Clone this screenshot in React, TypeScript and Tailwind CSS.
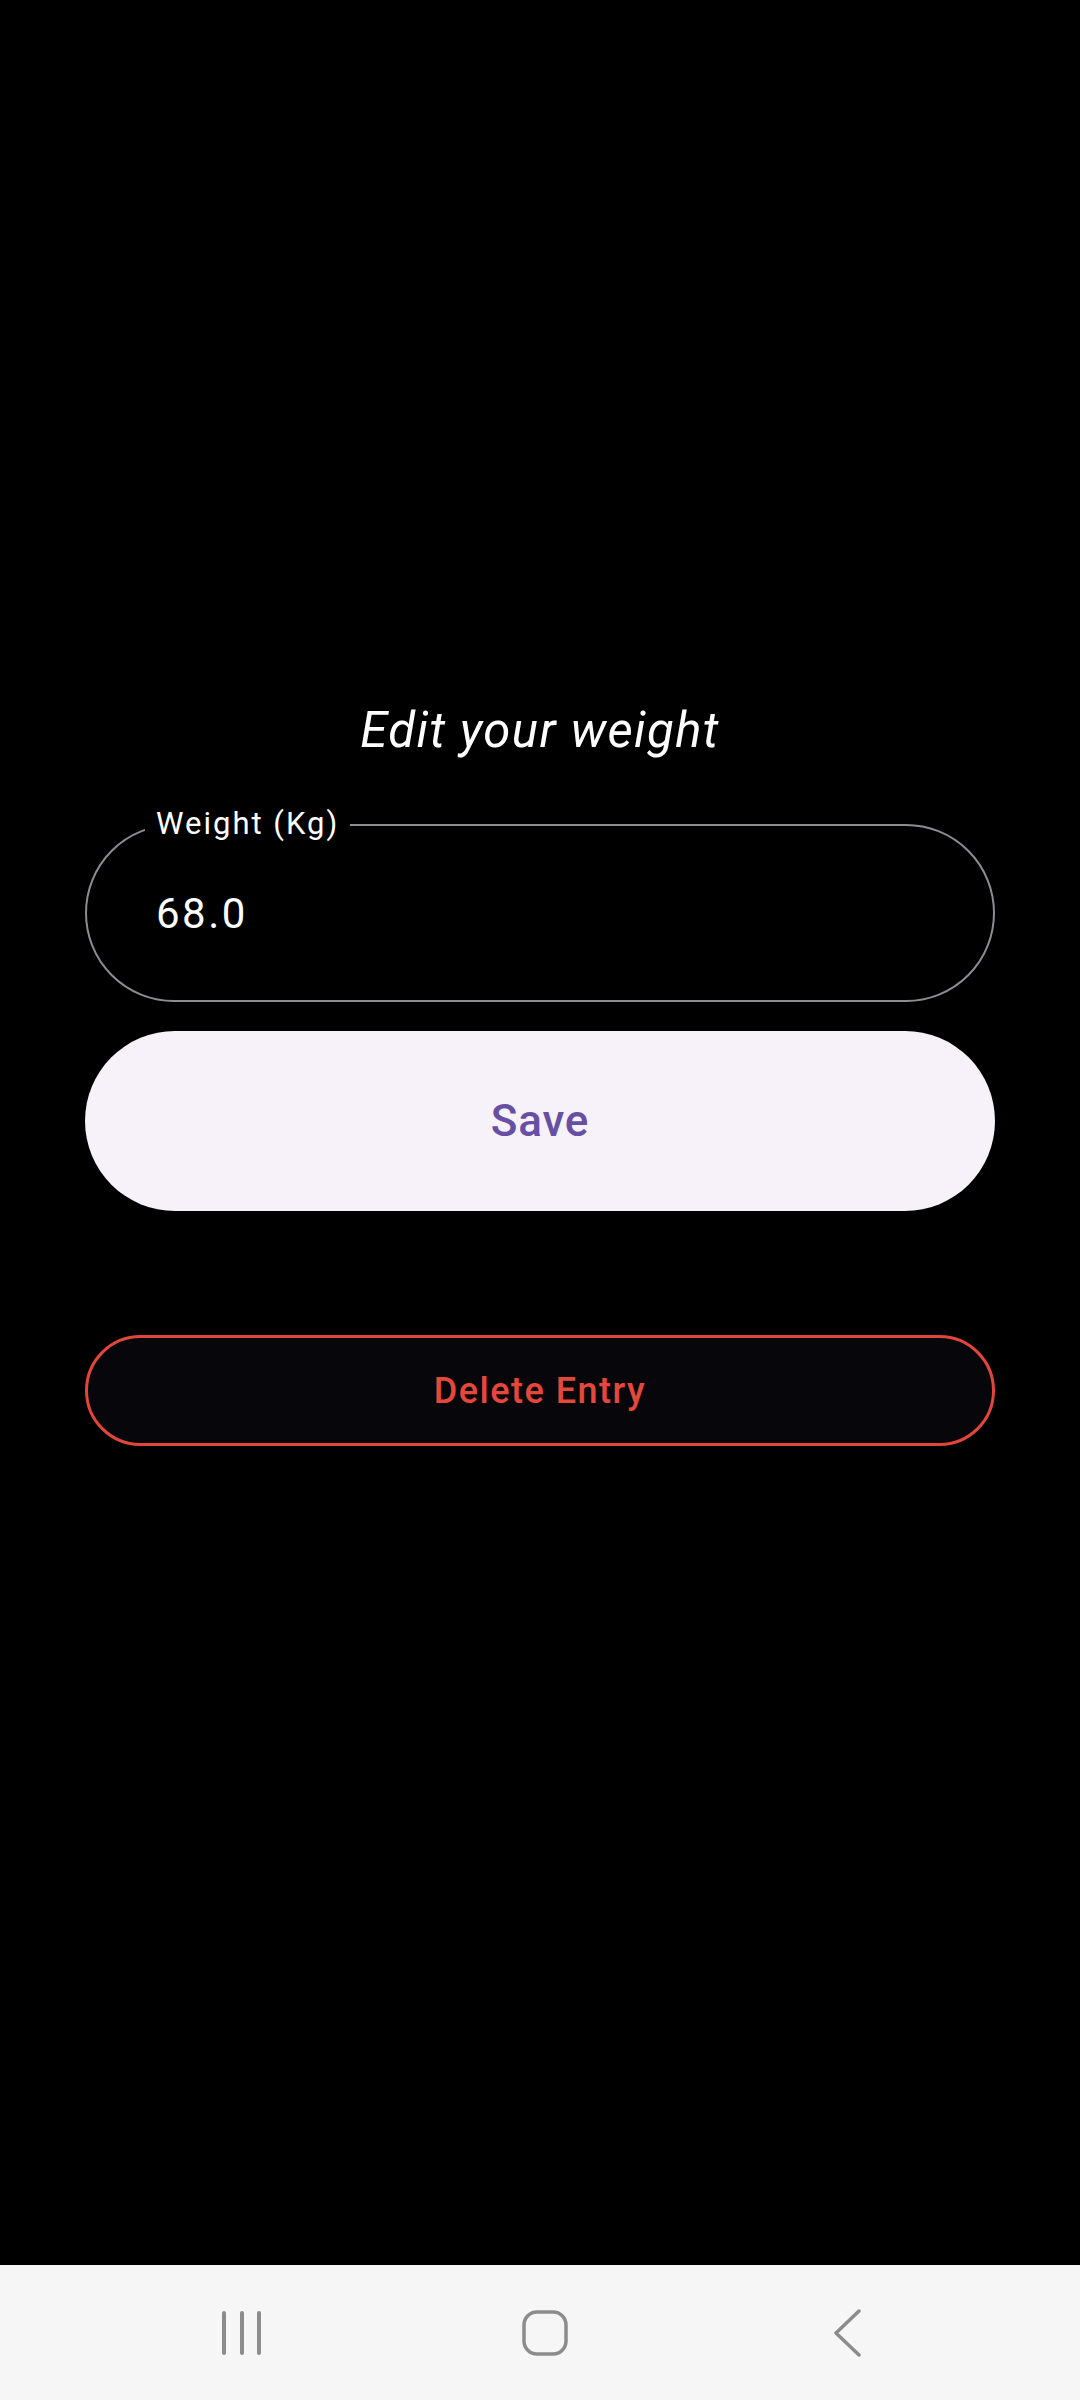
import React from 'react';

const NavBar: React.FC = () => (
  <div className="mt-auto h-[135px] bg-[#f6f6f6] flex items-center justify-center pl-[10px]">
    <div className="w-[303px] flex justify-center">
      <svg width="44" height="46" viewBox="0 0 44 46" fill="none" stroke="#8c8c8c" strokeWidth="4" strokeLinecap="round">
        <line x1="4" y1="3" x2="4" y2="43" />
        <line x1="22" y1="3" x2="22" y2="43" />
        <line x1="39" y1="3" x2="39" y2="43" />
      </svg>
    </div>
    <div className="w-[303px] flex justify-center">
      <svg width="46" height="46" viewBox="0 0 46 46" fill="none" stroke="#8c8c8c" strokeWidth="3.5">
        <rect x="2" y="2" width="42" height="42" rx="13" />
      </svg>
    </div>
    <div className="w-[303px] flex justify-center">
      <svg width="30" height="48" viewBox="0 0 30 48" fill="none" stroke="#8c8c8c" strokeWidth="3.5" strokeLinecap="round" strokeLinejoin="round">
        <polyline points="26,2 3,24 26,46" />
      </svg>
    </div>
  </div>
);

export default function App() {
  return (
    <div className="h-[2400px] bg-black flex flex-col font-['Roboto',_sans-serif]">
      <div className="flex flex-col px-[85px] pt-[703px]">
        <h1 className="text-center text-white italic font-normal text-[49px] leading-[56px] tracking-[1.4px]">
          Edit your weight
        </h1>

        {/* outlined text field */}
        <div className="relative mt-[65px] h-[178px] rounded-full border-2 border-[#8d8c91] flex items-center pl-[69px]">
          <span className="absolute top-[-20px] left-[58px] bg-black px-[11px] text-white text-[31px] leading-[36px] tracking-[2px]">
            Weight (Kg)
          </span>
          <span className="text-white text-[42px] leading-[49px] tracking-[2.5px]">68.0</span>
        </div>

        <button className="mt-[29px] h-[180px] rounded-full bg-[#f7f1f9] text-[#6750a4] text-[44px] font-medium tracking-[0.8px] flex items-center justify-center">
          Save
        </button>

        <button className="mt-[124px] h-[111px] rounded-full border-[3px] border-[#e2463b] bg-[#07060b] text-[#e5473c] text-[36px] font-medium tracking-[1.5px] flex items-center justify-center">
          Delete Entry
        </button>
      </div>

      <NavBar />
    </div>
  );
}
